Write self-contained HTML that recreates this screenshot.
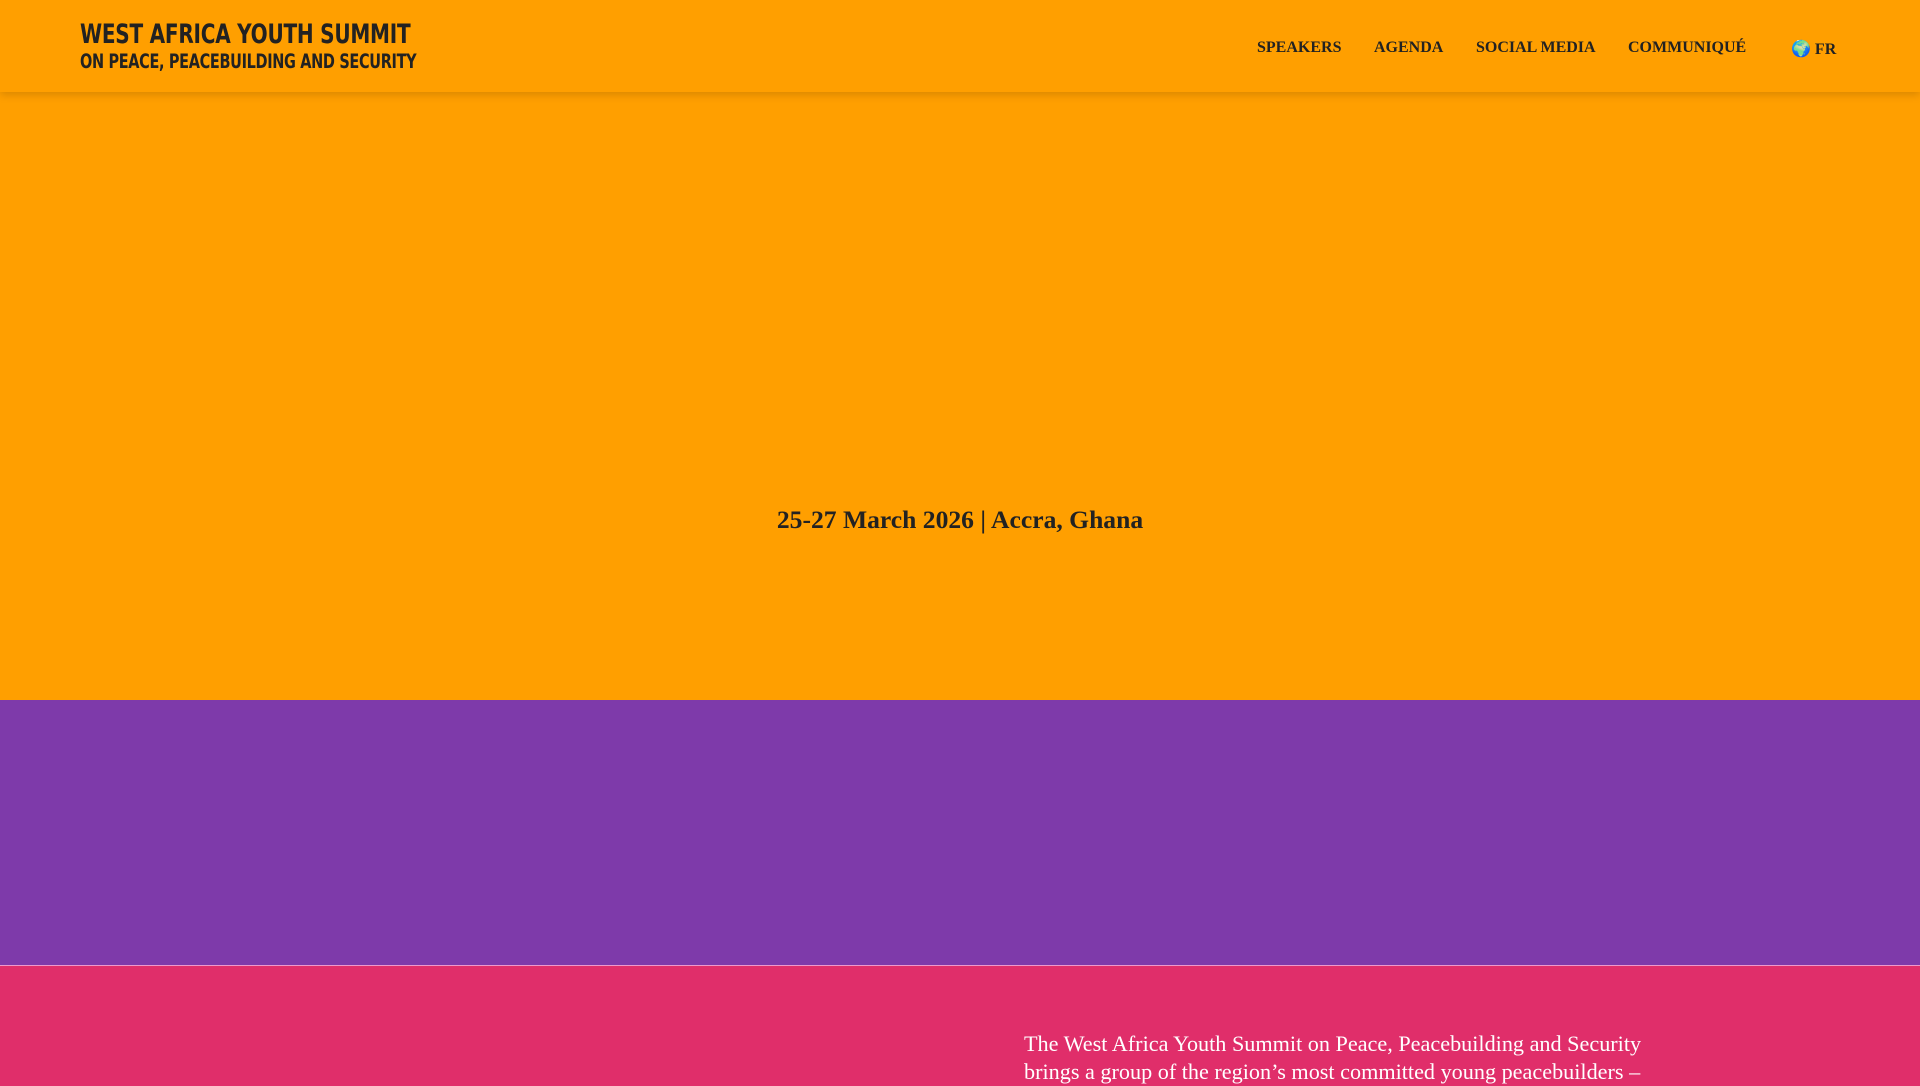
<!DOCTYPE html>
<html><head><meta charset="utf-8"><style>
*{margin:0;padding:0;box-sizing:border-box}
body{width:1920px;height:1080px;overflow:hidden;font-family:"Liberation Serif",serif;background:#E02E6A}
.hdr{position:absolute;left:0;top:0;width:1920px;height:92px;background:#FF9F00;box-shadow:0 3px 8px rgba(0,0,0,.15);z-index:2}
.logo{position:absolute;left:80px;top:20px;font-family:"DejaVu Sans Condensed","Liberation Sans Narrow",sans-serif;color:#222;font-weight:bold;transform:scaleX(0.825);transform-origin:left;white-space:nowrap}
.l1{font-size:27px;line-height:30px;letter-spacing:-0.3px}
.l2{font-size:19.5px;line-height:23px;letter-spacing:-0.4px}
.nav a{position:absolute;top:39px;font-size:16px;font-weight:bold;color:#222;text-decoration:none;white-space:nowrap}
.hero{position:absolute;top:0;left:0;width:1920px;height:700px;background:#FF9F00}
.date{position:absolute;top:505px;width:1920px;text-align:center;font-size:25.6px;font-weight:bold;color:#222}
.purple{position:absolute;top:700px;left:0;width:1920px;height:266px;background:#7E3AAA;border-bottom:1px solid #e9c}
.p{position:absolute;left:1024px;top:1030px;width:650px;font-size:22.2px;line-height:28px;color:#fff}
</style></head><body>
<div class="hero"><div class="date">25-27 March 2026 | Accra, Ghana</div></div>
<div class="hdr">
<div class="logo"><div class="l1">WEST AFRICA YOUTH SUMMIT</div><div class="l2">ON PEACE, PEACEBUILDING AND SECURITY</div></div>
<div class="nav">
<a style="left:1257px">SPEAKERS</a>
<a style="left:1374px">AGENDA</a>
<a style="left:1476px">SOCIAL MEDIA</a>
<a style="left:1628px">COMMUNIQUÉ</a>
<a style="left:1791px"><span style="font-size:16px">🌍</span> FR</a>
</div></div>
<div class="purple"></div>
<div class="p">The West Africa Youth Summit on Peace, Peacebuilding and Security brings a group of the region’s most committed young peacebuilders –</div>
</body></html>
